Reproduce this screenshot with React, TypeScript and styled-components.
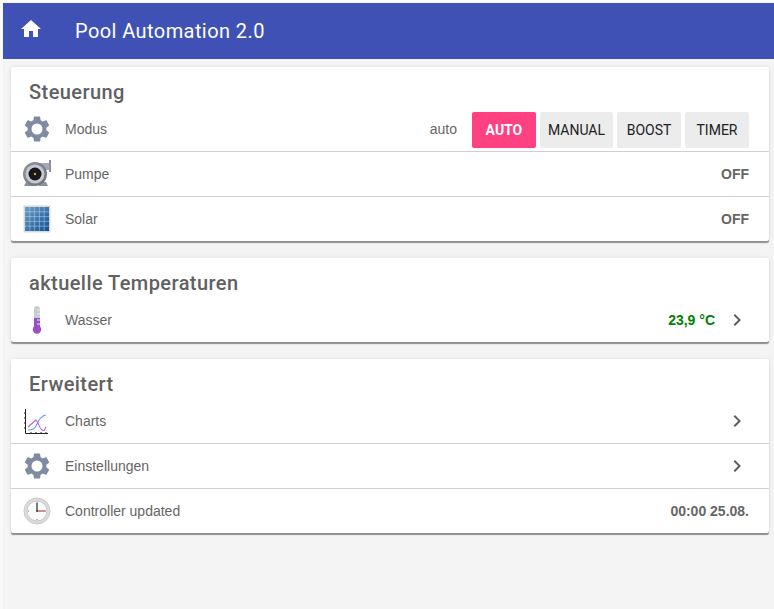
import React from 'react';
import styled, { createGlobalStyle } from 'styled-components';

const GlobalStyle = createGlobalStyle`
  html, body {
    margin: 0;
    padding: 0;
    background: #f9f9f9;
  }
  body {
    font-family: 'Liberation Sans', Arial, sans-serif;
    overflow: hidden;
  }
`;

const GearIcon = () => (
  <svg width="30" height="30" viewBox="0 0 24 24">
    <path
      fill="#7f8ba3"
      fillRule="evenodd"
      d="M19.43 12.98c.04-.32.07-.64.07-.98s-.03-.66-.07-.98l2.11-1.65c.19-.15.24-.42.12-.64l-2-3.46c-.12-.22-.39-.3-.61-.22l-2.49 1c-.52-.4-1.08-.73-1.69-.98l-.38-2.65C14.46 2.18 14.25 2 14 2h-4c-.25 0-.46.18-.49.42l-.38 2.65c-.61.25-1.17.59-1.69.98l-2.49-1c-.23-.09-.49 0-.61.22l-2 3.46c-.13.22-.07.49.12.64l2.11 1.65c-.04.32-.07.65-.07.98s.03.66.07.98l-2.11 1.65c-.19.15-.24.42-.12.64l2 3.46c.12.22.39.3.61.22l2.49-1c.52.4 1.08.73 1.69.98l.38 2.65c.03.24.24.42.49.42h4c.25 0 .46-.18.49-.42l.38-2.65c.61-.25 1.17-.59 1.69-.98l2.49 1c.23.09.49 0 .61-.22l2-3.46c.12-.22.07-.49-.12-.64l-2.11-1.65zM12 7.6a4.4 4.4 0 1 0 0 8.8a4.4 4.4 0 1 0 0-8.8z"
    />
  </svg>
);

const PumpIcon = () => (
  <svg width="30" height="28" viewBox="0 0 30 28">
    <defs>
      <linearGradient id="pumpBody" x1="0" y1="0" x2="1" y2="1">
        <stop offset="0" stopColor="#8f939e" />
        <stop offset="1" stopColor="#6b707c" />
      </linearGradient>
    </defs>
    <path fill="#8d919c" d="M4 22h7l1 4H2zM18 22h6l2 4h-9z" />
    <path fill="#a4a8b2" d="M14 3h14v7h-7z" />
    <rect x="27" y="0" width="2" height="12" fill="#8d919c" />
    <circle cx="13" cy="14" r="12" fill="url(#pumpBody)" />
    <circle cx="13" cy="14" r="9.5" fill="#c6c9cf" />
    <circle cx="13" cy="14" r="6.5" fill="#17171b" />
    <circle cx="13" cy="14" r="1.2" fill="#c9a832" />
  </svg>
);

const SolarIcon = () => (
  <svg width="28" height="28" viewBox="0 0 28 28">
    <defs>
      <linearGradient id="solarFill" x1="0" y1="0" x2="1" y2="1">
        <stop offset="0" stopColor="#6f9fc9" />
        <stop offset="1" stopColor="#0f4f92" />
      </linearGradient>
    </defs>
    <rect x="0.5" y="0.5" width="27" height="27" fill="#d5d9dd" />
    <rect x="2" y="2" width="24" height="24" fill="url(#solarFill)" />
    <path
      stroke="#cfe0ee"
      strokeWidth="0.6"
      strokeOpacity="0.75"
      fill="none"
      d="M6.8 2v24M11.6 2v24M16.4 2v24M21.2 2v24M2 6.8h24M2 11.6h24M2 16.4h24M2 21.2h24"
    />
  </svg>
);

const ThermometerIcon = () => (
  <svg width="12" height="30" viewBox="0 0 12 30">
    <rect x="3" y="1" width="6" height="16" rx="3" fill="#c8cdd0" />
    <rect x="3" y="13" width="6" height="10" fill="#9c4fc0" />
    <circle cx="6" cy="24.5" r="4.2" fill="#9c4fc0" />
    <path stroke="#eceef0" strokeWidth="1" d="M6 5h3M6 9h3M6 15h3M6 19h3" />
  </svg>
);

const ChartIcon = () => (
  <svg width="28" height="28" viewBox="0 0 28 28" fill="none">
    <path stroke="#222" strokeWidth="1" d="M2.5 2v24.5H25" />
    <path stroke="#222" strokeWidth="1" d="M1 6h2M1 11h2M1 16h2M1 21h2M8 25v2M13 25v2M18 25v2M23 25v2" />
    <path stroke="#5f9cf0" strokeWidth="1.1" d="M5 23c5 0 7-1 9-6s4-8 9-9" />
    <path stroke="#b565dd" strokeWidth="1.1" d="M5 20l8-7c2 1 3 8 6 10s3-2 4-3" />
  </svg>
);

const ClockIcon = () => (
  <svg width="28" height="28" viewBox="0 0 28 28">
    <circle cx="14" cy="14" r="13" fill="#dcdcdc" stroke="#cacaca" />
    <circle cx="14" cy="14" r="10" fill="#fbfbfb" stroke="#c8c8c8" />
    <path stroke="#444" strokeWidth="1.4" d="M14 6v8" />
    <path stroke="#b04a42" strokeWidth="1.2" d="M14 14h8" />
    <path stroke="#777" strokeWidth="1" d="M14 5v1M14 22v1M5 14h1M22 14h1" />
    <circle cx="14" cy="14" r="1" fill="#444" />
  </svg>
);

const HomeIcon = () => (
  <svg width="24" height="24" viewBox="0 0 24 24">
    <path fill="#fff" d="M10 20v-6h4v6h5v-8h3L12 3 2 12h3v8z" />
  </svg>
);

const ChevronIcon = () => (
  <svg width="24" height="24" viewBox="0 0 24 24">
    <path fill="#5f5f5f" d="M10 6 8.59 7.41 13.17 12l-4.58 4.59L10 18l6-6z" />
  </svg>
);

const Page = styled.div`
  margin: 3px 0 0 3px;
  height: 606px;
  background: #f4f4f4;
`;

const Toolbar = styled.header`
  height: 56px;
  display: flex;
  align-items: center;
  background: #3f51b5;
  color: #fff;
`;

const HomeButton = styled.div`
  width: 56px;
  margin: 0 16px 4px 0;
  display: flex;
  justify-content: center;
`;

const AppTitle = styled.div`
  font-family: Roboto, sans-serif;
  font-size: 20px;
  font-weight: 400;
  letter-spacing: 0.42px;
`;

const Main = styled.main`
  display: flex;
  flex-direction: column;
  gap: 17px;
  padding: 8px 5px 0 8px;
`;

const Card = styled.section`
  background: #fff;
  border-radius: 2px;
  box-shadow: 0 2px 1px rgba(0, 0, 0, 0.4), 0 0 4px rgba(0, 0, 0, 0.08);
`;

const CardTitle = styled.h2`
  margin: 0;
  height: 40px;
  padding: 14px 18px 0;
  box-sizing: border-box;
  font-family: Roboto, sans-serif;
  font-size: 20px;
  line-height: 22px;
  font-weight: 500;
  letter-spacing: 0.43px;
  color: #616161;
`;

const Row = styled.div`
  height: 44px;
  display: flex;
  align-items: center;
  padding: 0 20px 0 10px;
  font-size: 14px;
  color: #666;

  &:not(:last-child) {
    border-bottom: 1px solid #cfcfcf;
  }
`;

const IconSlot = styled.div`
  width: 32px;
  height: 32px;
  margin-right: 12px;
  display: flex;
  align-items: center;
  justify-content: center;
`;

const Label = styled.span`
  flex: 1;
`;

const ModeText = styled.span`
  margin-right: 15px;
`;

const ModeButtons = styled.div`
  display: flex;
  gap: 4px;
  margin-top: 2px;
`;

const ModeButton = styled.div<{ $active?: boolean }>`
  height: 36px;
  min-width: 64px;
  padding: 0 8px;
  box-sizing: border-box;
  display: flex;
  align-items: center;
  justify-content: center;
  border-radius: 2px;
  font-family: Roboto, sans-serif;
  font-size: 14px;
  font-weight: ${p => (p.$active ? 700 : 400)};
  background: ${p => (p.$active ? '#ff4081' : '#ececec')};
  color: ${p => (p.$active ? '#fff' : '#212121')};
`;

const Value = styled.span<{ $green?: boolean }>`
  font-weight: 700;
  color: ${p => (p.$green ? '#008000' : '#666')};
`;

const Chevron = styled.div`
  width: 24px;
  height: 24px;
  margin-left: 10px;
`;

const App = () => {
  return (
    <>
      <GlobalStyle />
      <Page>
        <Toolbar>
          <HomeButton>
            <HomeIcon />
          </HomeButton>
          <AppTitle>Pool Automation 2.0</AppTitle>
        </Toolbar>
        <Main>
          <Card>
            <CardTitle>Steuerung</CardTitle>
            <Row>
              <IconSlot><GearIcon /></IconSlot>
              <Label>Modus</Label>
              <ModeText>auto</ModeText>
              <ModeButtons>
                <ModeButton $active>AUTO</ModeButton>
                <ModeButton>MANUAL</ModeButton>
                <ModeButton>BOOST</ModeButton>
                <ModeButton>TIMER</ModeButton>
              </ModeButtons>
            </Row>
            <Row>
              <IconSlot><PumpIcon /></IconSlot>
              <Label>Pumpe</Label>
              <Value>OFF</Value>
            </Row>
            <Row>
              <IconSlot><SolarIcon /></IconSlot>
              <Label>Solar</Label>
              <Value>OFF</Value>
            </Row>
          </Card>
          <Card>
            <CardTitle>aktuelle Temperaturen</CardTitle>
            <Row>
              <IconSlot><ThermometerIcon /></IconSlot>
              <Label>Wasser</Label>
              <Value $green>23,9 °C</Value>
              <Chevron><ChevronIcon /></Chevron>
            </Row>
          </Card>
          <Card>
            <CardTitle>Erweitert</CardTitle>
            <Row>
              <IconSlot><ChartIcon /></IconSlot>
              <Label>Charts</Label>
              <Chevron><ChevronIcon /></Chevron>
            </Row>
            <Row>
              <IconSlot><GearIcon /></IconSlot>
              <Label>Einstellungen</Label>
              <Chevron><ChevronIcon /></Chevron>
            </Row>
            <Row>
              <IconSlot><ClockIcon /></IconSlot>
              <Label>Controller updated</Label>
              <Value>00:00 25.08.</Value>
            </Row>
          </Card>
        </Main>
      </Page>
    </>
  );
};

export default App;
